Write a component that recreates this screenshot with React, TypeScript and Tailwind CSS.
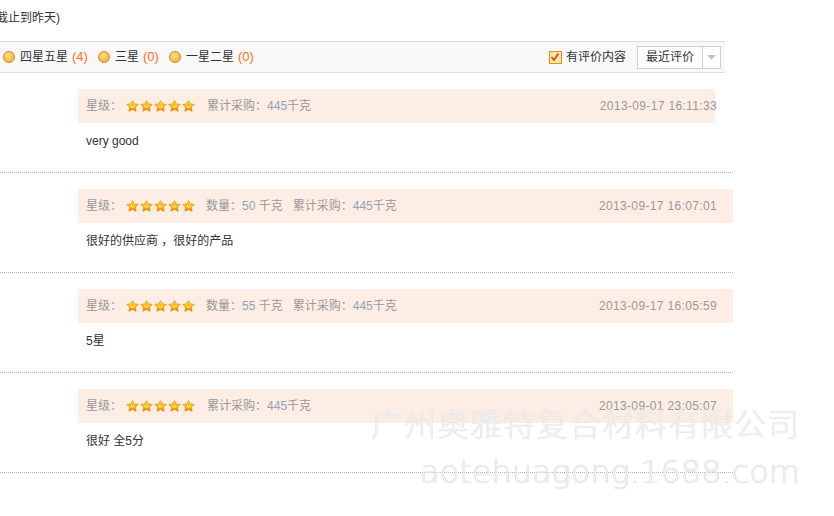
import React from 'react'

const font = { fontFamily: '"Liberation Sans", "Noto Sans CJK SC", sans-serif' }

type Review = {
  qty?: string
  total: string
  date: string
  text: string
  torn?: boolean
}

const reviews: Review[] = [
  { total: '445', date: '2013-09-17 16:11:33', text: 'very good', torn: true },
  { qty: '50', total: '445', date: '2013-09-17 16:07:01', text: '很好的供应商 ，很好的产品' },
  { qty: '55', total: '445', date: '2013-09-17 16:05:59', text: '5星' },
  { total: '445', date: '2013-09-01 23:05:07', text: '很好 全5分' },
]

function Star() {
  return (
    <svg width="13" height="12" viewBox="0 0 13 12">
      <defs>
        <linearGradient id="sg" x1="0" y1="0" x2="0" y2="1">
          <stop offset="0" stopColor="#ffe45c" />
          <stop offset="0.6" stopColor="#ffb400" />
          <stop offset="1" stopColor="#f07800" />
        </linearGradient>
      </defs>
      <path
        d="M6.5 0.6 L8.2 3.9 L12.2 4.4 L9.4 7.2 L10.1 11.3 L6.5 9.4 L2.9 11.3 L3.6 7.2 L0.8 4.4 L4.8 3.9 Z"
        fill="url(#sg)"
        stroke="#e58a00"
        strokeWidth="0.7"
        strokeLinejoin="round"
      />
      <path d="M4.3 6.3 Q6.5 8.2 8.7 6.3" fill="none" stroke="#fff6c0" strokeWidth="1" />
    </svg>
  )
}

function Radio() {
  return (
    <span className="inline-block h-[12px] w-[12px] rounded-full border border-[#c8902a] bg-[radial-gradient(circle_at_40%_35%,#ffe08a,#f7b53a_70%,#e59a20)]" />
  )
}

function Filter({ label, count }: { label: string; count: string }) {
  return (
    <span className="flex items-center">
      <Radio />
      <span className="ml-[5px] text-[#333]">{label}</span>
      <span className="ml-[4px] text-[13px] text-[#ff6f1a]">({count})</span>
    </span>
  )
}

function ReviewBlock({ r }: { r: Review }) {
  return (
    <div className="pt-[16px]">
      <div
        className={`ml-[78px] flex h-[34px] items-center pl-[8px] pr-[16px] text-[12px] text-[#999] ${
          r.torn
            ? 'bg-[linear-gradient(to_right,#fdeee5_637px,transparent_637px)]'
            : 'bg-[#fdeee5]'
        }`}
      >
        <span>星级：</span>
        <span className="ml-[4px] flex gap-[1px]">
          {[0, 1, 2, 3, 4].map((i) => (
            <Star key={i} />
          ))}
        </span>
        {r.qty && (
          <span className="ml-[11px]">
            数量：<span className="text-[#92a3b4]">{r.qty}</span> 千克
          </span>
        )}
        <span className={r.qty ? 'ml-[10px]' : 'ml-[12px]'}>
          累计采购：<span className="text-[#92a3b4]">{r.total}</span>千克
        </span>
        <span className="ml-auto tracking-[0.35px] text-[#999]">{r.date}</span>
      </div>
      <div className="h-[50px] border-b border-dotted border-[#b5b5b5] pl-[86px] pt-[9px] text-[12px] leading-[18px] text-[#333]">
        {r.text}
      </div>
    </div>
  )
}

export default function App() {
  return (
    <div className="relative h-[516px] w-[834px] overflow-hidden bg-white text-[12px]" style={font}>
      <div className="h-[41px] pt-[9px] leading-[18px] text-[#333]">
        <span className="-ml-[4px]">截止到昨天)</span>
      </div>

      <div className="flex h-[32px] w-[725px] items-center border-y border-[#dedede] bg-[#f8f8f8] pl-[3px] pr-[4px]">
        <div className="flex items-center gap-[10px]">
          <Filter label="四星五星" count="4" />
          <Filter label="三星" count="0" />
          <Filter label="一星二星" count="0" />
        </div>
        <div className="ml-auto flex items-center">
          <span className="flex h-[13px] w-[13px] items-center justify-center border border-[#e0901a] bg-[#fde3b0]">
            <svg width="10" height="10" viewBox="0 0 10 10">
              <path d="M1.5 5 L4 8 L8.5 1.5" fill="none" stroke="#d0500a" strokeWidth="1.8" />
            </svg>
          </span>
          <span className="ml-[4px] text-[#333]">有评价内容</span>
          <div className="ml-[11px] flex h-[23px] w-[84px] items-stretch border border-[#cfcfcf] bg-white">
            <span className="flex flex-1 items-center pl-[8px] text-[#333]">最近评价</span>
            <span className="flex w-[18px] items-center justify-center border-l border-[#cfcfcf]">
              <svg width="9" height="5" viewBox="0 0 9 5">
                <path d="M0 0 L9 0 L4.5 5 Z" fill="#c4c4c4" />
              </svg>
            </span>
          </div>
        </div>
      </div>

      <div className="w-[733px]">
        {reviews.map((r, i) => (
          <ReviewBlock key={i} r={r} />
        ))}
      </div>

      <div className="pointer-events-none absolute right-[34px] top-[402px] flex flex-col items-end">
        <span
          className="text-[32px] leading-[40px] tracking-[1px] text-[#f2f2f2]"
          style={{ fontFamily: '"Noto Sans CJK SC", sans-serif', fontWeight: 300, textShadow: '0 0 1px #c8c8c8' }}
        >
          广州奥雅特复合材料有限公司
        </span>
        <span
          className="mt-[10px] text-[32px] leading-[40px] text-[#f0f0f0]"
          style={{ fontFamily: '"DejaVu Sans", sans-serif', fontWeight: 200, textShadow: '0 0 1px #c0c0c0' }}
        >
          aotehuagong.1688.com
        </span>
      </div>
    </div>
  )
}
